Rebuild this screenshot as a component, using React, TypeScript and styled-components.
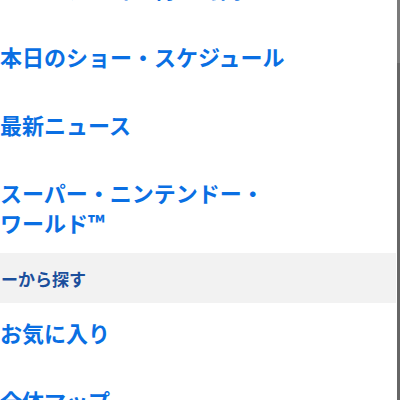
import React from 'react';
import styled, { createGlobalStyle } from 'styled-components';

const GlobalStyle = createGlobalStyle`
  html, body {
    margin: 0;
    padding: 0;
    background: #ffffff;
  }
  body {
    font-family: "Noto Sans CJK JP", "Noto Sans", sans-serif;
  }
`;

const Frame = styled.div`
  width: 400px;
  height: 400px;
  display: flex;
  overflow: hidden;
`;

const Panel = styled.div`
  flex: 1;
  overflow: hidden;
  background: #ffffff;
  padding-right: 1px;
`;

const Menu = styled.ul<{ $offset?: number }>`
  list-style: none;
  margin: 0;
  padding: 0;
  margin-top: ${(p) => p.$offset ?? 0}px;
`;

const Item = styled.li<{ $top?: number; $bottom?: number }>`
  padding-top: ${(p) => p.$top ?? 19}px;
  padding-bottom: ${(p) => p.$bottom ?? 19}px;
  font-size: 22px;
  line-height: 30px;
  font-weight: 700;
  color: #0a6fe3;
`;

const SectionHead = styled.div`
  height: 50px;
  display: flex;
  align-items: center;
  padding-left: 1px;
  background: #f2f2f2;
  color: #1b4f9c;
  font-size: 17px;
  font-weight: 700;
`;

const Rail = styled.div`
  width: 3px;
  background: #666666;
  display: flex;
  flex-direction: column;
`;

const Thumb = styled.div`
  height: 63px;
  background: #7a7a7a;
`;

const topItems = [
  'アトラクション待ち時間',
  '本日のショー・スケジュール',
  '最新ニュース',
];

const App: React.FC = () => {
  return (
    <>
      <GlobalStyle />
      <Frame>
        <Panel>
          <Menu $offset={-46}>
            {topItems.map((t) => (
              <Item key={t}>{t}</Item>
            ))}
            <Item $bottom={16}>
              スーパー・ニンテンドー・
              <br />
              ワールド™
            </Item>
          </Menu>
          <SectionHead>ーから探す</SectionHead>
          <Menu>
            <Item $top={14}>お気に入り</Item>
            <Item>全体マップ</Item>
          </Menu>
        </Panel>
        <Rail>
          <Thumb />
        </Rail>
      </Frame>
    </>
  );
};

export default App;
